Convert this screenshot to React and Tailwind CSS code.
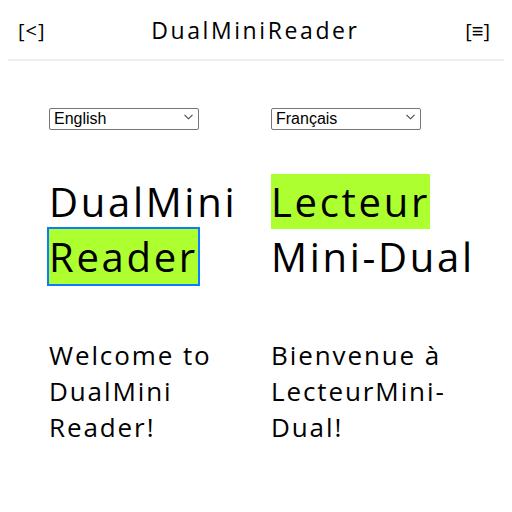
import { useState } from 'react';

const sans = "font-['Open_Sans',sans-serif]";

function LangSelect({ value, options, onChange }) {
  return (
    <div className="relative w-[150px] h-[22px]">
      <select
        value={value}
        onChange={(e) => onChange(e.target.value)}
        className="appearance-none w-full h-full border border-[#767676] rounded-[2px] bg-white pl-[4px] pr-5 text-[16px] leading-[20px] text-black font-['Liberation_Sans',Arial,sans-serif]"
      >
        {options.map((o) => (
          <option key={o}>{o}</option>
        ))}
      </select>
      {/* chevron */}
      <svg
        className="absolute right-[6px] top-[8px] pointer-events-none"
        width="9"
        height="6"
        viewBox="0 0 9 6"
        fill="none"
      >
        <path d="M0.5 0.8 L4.5 4.8 L8.5 0.8" stroke="#444" strokeWidth="1.1" />
      </svg>
    </div>
  );
}

function Column({ lang, setLang, options, title, welcome }) {
  return (
    <div className="flex flex-col">
      <LangSelect value={lang} options={options} onChange={setLang} />
      <h2 className={`${sans} mt-[46px] text-[40px] leading-[55px] tracking-[2.7px] font-normal text-black`}>
        {title}
      </h2>
      <p className={`${sans} mt-[53px] text-[26px] leading-[36px] tracking-[1.9px] text-black`}>
        {welcome}
      </p>
    </div>
  );
}

export default function App() {
  const [left, setLeft] = useState('English');
  const [right, setRight] = useState('Français');

  return (
    <div className="w-[512px] h-[512px] bg-white px-2 overflow-hidden">
      {/* Header */}
      <header className={`${sans} h-[61px] border-b-2 border-[#eeeeee] flex items-center justify-between pl-[10px] pr-[14px] text-black`}>
        <button className="text-[20px] tracking-[1px] pt-[2px]">[&lt;]</button>
        <h1 className="text-[23px] tracking-[2.6px] font-normal pt-[1px]">DualMiniReader</h1>
        <button className="text-[20px] tracking-[0px] pt-[2px]">[≡]</button>
      </header>

      {/* Two reading columns */}
      <div className="grid grid-cols-[222px_210px] pl-[41px] pt-[45px]">
        <Column
          lang={left}
          setLang={setLeft}
          options={['English', 'Français', 'Deutsch', 'Español']}
          title={
            <>
              DualMini{' '}
              <span className="bg-[#adff2f] outline-2 outline-[#0b7cff]">Reader</span>
            </>
          }
          welcome="Welcome to DualMini Reader!"
        />
        <Column
          lang={right}
          setLang={setRight}
          options={['Français', 'English', 'Deutsch', 'Español']}
          title={
            <>
              <span className="bg-[#adff2f]">Lecteur</span> Mini-Dual
            </>
          }
          welcome="Bienvenue à LecteurMini-Dual!"
        />
      </div>
    </div>
  );
}
